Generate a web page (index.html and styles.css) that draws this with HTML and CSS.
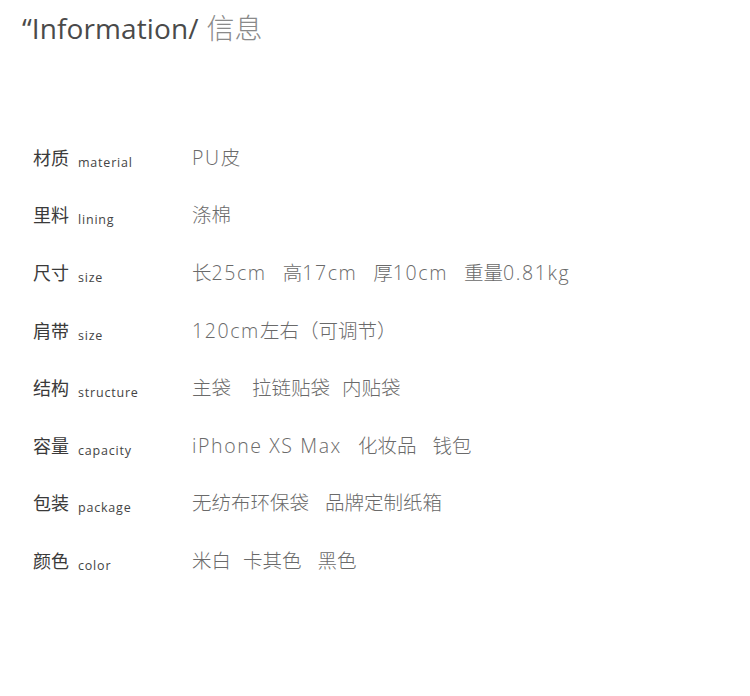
FILE: index.html
```html
<!DOCTYPE html>
<html lang="zh">
<head>
<meta charset="utf-8">
<link rel="stylesheet" href="styles.css">
</head>
<body>
<div class="page">
  <h1 class="title"><span class="title-en">“Information/</span><span class="title-cn">信息</span></h1>
  <div class="specs">
    <div class="row"><div class="label"><span class="cn">材质</span><span class="en">material</span></div><div class="value"><span class="lat">PU</span>皮</div></div>
    <div class="row"><div class="label"><span class="cn">里料</span><span class="en">lining</span></div><div class="value">涤棉</div></div>
    <div class="row"><div class="label"><span class="cn">尺寸</span><span class="en">size</span></div><div class="value"><span class="g2">长<span class="lat">25cm</span></span><span class="g2">高<span class="lat">17cm</span></span><span class="g2">厚<span class="lat">10cm</span></span><span>重量<span class="lat">0.81kg</span></span></div></div>
    <div class="row"><div class="label"><span class="cn">肩带</span><span class="en">size</span></div><div class="value"><span class="lat">120cm</span>左右（可调节）</div></div>
    <div class="row"><div class="label"><span class="cn">结构</span><span class="en">structure</span></div><div class="value"><span class="g3">主袋</span><span class="g1b">拉链贴袋</span><span>内贴袋</span></div></div>
    <div class="row"><div class="label"><span class="cn">容量</span><span class="en">capacity</span></div><div class="value"><span class="g2 lat">iPhone XS Max</span><span class="g2">化妆品</span><span>钱包</span></div></div>
    <div class="row"><div class="label"><span class="cn">包装</span><span class="en">package</span></div><div class="value"><span class="g2">无纺布环保袋</span><span>品牌定制纸箱</span></div></div>
    <div class="row"><div class="label"><span class="cn">颜色</span><span class="en">color</span></div><div class="value"><span class="g1b">米白</span><span class="g2">卡其色</span><span>黑色</span></div></div>
  </div>
</div>
</body>
</html>
```

FILE: styles.css
```css
html, body {
  margin: 0;
  padding: 0;
  background: #ffffff;
}
.page {
  width: 750px;
  height: 696px;
  padding: 9px 0 0 22px;
  box-sizing: border-box;
}
.title {
  margin: 0;
  font-weight: normal;
  font-size: 28px;
  line-height: 36px;
}
.title-en {
  color: #4a4a4a;
  font-family: "Open Sans", sans-serif;
  letter-spacing: 0.1px;
}
.title-cn {
  color: #8a8a8a;
  margin-left: 8px;
  font-size: 28px;
  font-family: "Noto Sans CJK SC", sans-serif;
  font-weight: 300;
}
.specs {
  margin-top: 80px;
  padding-left: 11px;
}
.row {
  display: grid;
  grid-template-columns: 159px 1fr;
  align-items: center;
  height: 57.6px;
}
.label {
  display: flex;
  align-items: baseline;
}
.cn {
  font-family: "Noto Sans CJK SC", sans-serif;
  font-size: 18px;
  color: #3a3a3a;
  font-weight: 400;
}
.en {
  font-family: "Open Sans", sans-serif;
  font-size: 12.5px;
  letter-spacing: 0.8px;
  color: #444444;
  margin-left: 9px;
  position: relative;
  top: 2px;
}
.value {
  font-family: "Open Sans", "Noto Sans CJK SC", sans-serif;
  font-size: 19.5px;
  color: #6a6a6a;
  font-weight: 300;
  margin-top: -1px;
  white-space: nowrap;
}
.lat {
  letter-spacing: 1.6px;
}
.g1b { margin-right: 12px; }
.g2 { margin-right: 16px; }
.g3 { margin-right: 21px; }
```
